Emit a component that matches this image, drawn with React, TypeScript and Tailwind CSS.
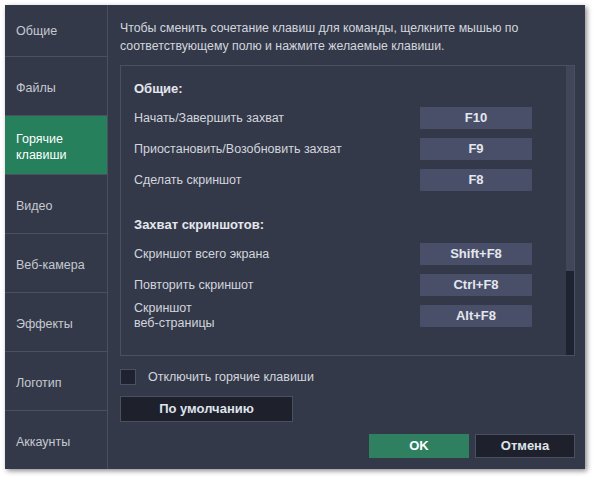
import React from "react";

const tabs = [
  "Общие",
  "Файлы",
  "Горячие клавиши",
  "Видео",
  "Веб-камера",
  "Эффекты",
  "Логотип",
  "Аккаунты",
];

type Row = { label: React.ReactNode; keys: string };

const general: Row[] = [
  { label: "Начать/Завершить захват", keys: "F10" },
  { label: "Приостановить/Возобновить захват", keys: "F9" },
  { label: "Сделать скриншот", keys: "F8" },
];

const shots: Row[] = [
  { label: "Скриншот всего экрана", keys: "Shift+F8" },
  { label: "Повторить скриншот", keys: "Ctrl+F8" },
  {
    label: (
      <>
        Скриншот
        <br />
        веб-страницы
      </>
    ),
    keys: "Alt+F8",
  },
];

function HotkeyRow({ row }: { row: Row }) {
  return (
    <div className="flex h-[22px] items-center">
      <div className="w-[286px] text-[12.5px] leading-[15px] text-[#d2d6de]">{row.label}</div>
      <div className="flex h-[22px] w-[112px] items-center justify-center bg-[#4a4f69] text-[13px] font-bold text-[#e4e7ee]">
        {row.keys}
      </div>
    </div>
  );
}

export default function App() {
  return (
    <div
      className="h-[478px] w-[594px] bg-white pl-[5px] pt-[5px]"
      style={{ fontFamily: '"Liberation Sans", "DejaVu Sans", sans-serif' }}
    >
      <div className="flex h-[464px] w-[580px] bg-[#343949] shadow-[2px_2px_5px_rgba(0,0,0,0.45)]">
        {/* sidebar */}
        <div className="flex w-[103px] flex-col border-r border-[#4a4f62]">
          {tabs.map((t, i) => {
            const active = i === 2;
            const last = i === tabs.length - 1;
            const h =
              i === 0
                ? "h-[52px] border-b border-[#4a4f62] "
                : last
                  ? "flex-1 pt-[3px] "
                  : "h-[59px] pt-[3px] border-b border-[#4a4f62] ";
            return (
              <div
                key={t}
                className={
                  "flex items-center pl-[11px] pr-2 text-[12.5px] leading-[16px] " +
                  h +
                  (active ? "bg-[#26805c] text-white" : "text-[#c5c9d1]")
                }
              >
                {t === "Горячие клавиши" ? (
                  <span>
                    Горячие
                    <br />
                    клавиши
                  </span>
                ) : (
                  t
                )}
              </div>
            );
          })}
        </div>

        {/* main */}
        <div className="flex flex-1 flex-col pl-[12px] pr-[10px] pt-[14px]">
          <p className="text-[12.3px] leading-[18px] text-[#d2d6de]">
            Чтобы сменить сочетание клавиш для команды, щелкните мышью по
            <br />
            соответствующему полю и нажмите желаемые клавиши.
          </p>

          <div className="mt-[10px] flex h-[291px] border border-[#4a4f62]">
            <div className="flex flex-1 flex-col pl-[13px] pt-[14px]">
              <div className="h-[18px] text-[13px] font-bold leading-[18px] text-[#e4e7ee]">Общие:</div>
              <div className="mt-[9px] flex flex-col gap-[9px]">
                {general.map((r, i) => (
                  <HotkeyRow key={i} row={r} />
                ))}
              </div>
              <div className="mt-[25px] h-[18px] text-[13px] font-bold leading-[18px] text-[#e4e7ee]">
                Захват скриншотов:
              </div>
              <div className="mt-[9px] flex flex-col gap-[9px]">
                {shots.map((r, i) => (
                  <HotkeyRow key={i} row={r} />
                ))}
              </div>
            </div>
            <div className="flex w-[8px] flex-col bg-[#1f2230]">
              <div className="h-[205px] bg-[#434659]" />
            </div>
          </div>

          <label className="mt-[13px] flex h-[16px] items-center">
            <span className="h-[16px] w-[16px] border border-[#4a4f62] bg-[#1f2230]" />
            <span className="ml-[12px] text-[12.5px] leading-[16px] text-[#d2d6de]">Отключить горячие клавиши</span>
          </label>

          <button className="mt-[11px] h-[26px] w-[173px] border border-[#4a4f62] bg-[#1e212c] text-[13px] font-bold text-[#dfe3ea]">
            По умолчанию
          </button>

          <div className="mt-[12px] flex justify-end gap-[6px]">
            <button className="h-[24px] w-[100px] bg-[#2e8060] text-[13px] font-bold text-white">OK</button>
            <button className="h-[24px] w-[100px] border border-[#4a4f62] bg-[#1e212c] text-[13px] font-bold text-[#dfe3ea]">
              Отмена
            </button>
          </div>
        </div>
      </div>
    </div>
  );
}
